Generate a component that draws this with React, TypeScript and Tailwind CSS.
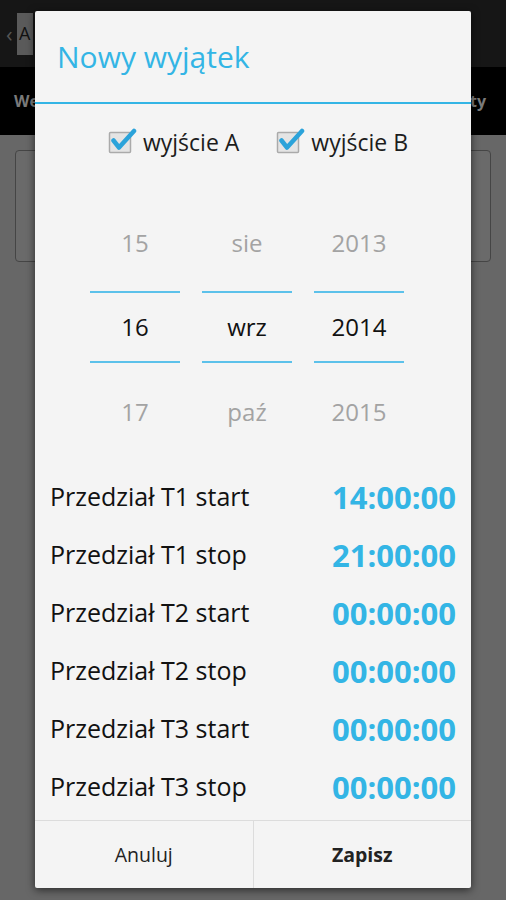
import React from "react";

const rows = [
  { label: "Przedział T1 start", value: "14:00:00" },
  { label: "Przedział T1 stop", value: "21:00:00" },
  { label: "Przedział T2 start", value: "00:00:00" },
  { label: "Przedział T2 stop", value: "00:00:00" },
  { label: "Przedział T3 start", value: "00:00:00" },
  { label: "Przedział T3 stop", value: "00:00:00" },
];

const columns = [
  ["15", "16", "17"],
  ["sie", "wrz", "paź"],
  ["2013", "2014", "2015"],
];

function CheckBox({ label }: { label: string }) {
  return (
    <div className="flex items-center gap-[5px]">
      <svg width="30" height="28" viewBox="0 0 30 28">
        <rect x="1.5" y="4.5" width="21" height="20" fill="#e4e4e4" stroke="#aaaaaa" strokeWidth="1.5" rx="1" />
        <path d="M5.5 12.5 L11 19.5 L26 3" fill="none" stroke="#2ba3da" strokeWidth="4.5" strokeLinecap="round" strokeLinejoin="round" />
      </svg>
      <span className="text-[23px] text-[#1c1c1c]">{label}</span>
    </div>
  );
}

function PickerColumn({ items }: { items: string[] }) {
  return (
    <div className="flex w-[90px] flex-col items-center">
      <div className="mt-[45px] h-[36px] text-[24px] leading-[36px] text-[#a3a3a3]">{items[0]}</div>
      <div className="mt-[30px] h-[2px] w-full bg-[#5cc1ea]" />
      <div className="mt-[16px] h-[36px] text-[24px] leading-[36px] text-[#111]">{items[1]}</div>
      <div className="mt-[16px] h-[2px] w-full bg-[#5cc1ea]" />
      <div className="mt-[31px] h-[36px] text-[24px] leading-[36px] text-[#a3a3a3]">{items[2]}</div>
    </div>
  );
}

export default function App() {
  return (
    <div className="relative h-[900px] w-[506px] overflow-hidden bg-[#676767] font-['Open_Sans',sans-serif]">
      {/* action bar */}
      <div className="flex h-[67px] items-center bg-[#161616] pl-[6px]">
        <span className="text-[22px] text-[#555]">‹</span>
        <div className="ml-[4px] flex h-[42px] w-[16px] items-center justify-center bg-[#5a5a5a] text-[18px] text-[#111]">A</div>
      </div>
      {/* tabs */}
      <div className="flex h-[68px] items-center justify-between bg-black pl-[14px] pr-[20px] text-[16px] font-bold text-[#7a7a7a]">
        <span>Wejścia</span>
        <span>Wyjątki</span>
        <span>Kontakty</span>
      </div>
      {/* content */}
      <div className="px-[15px] pt-[15px]">
        <div className="h-[112px] rounded-[4px] border border-[#454545] bg-[#6a6a6a]" />
      </div>

      {/* dialog */}
      <div className="absolute left-[35px] top-[11px] flex h-[877px] w-[436px] flex-col rounded-[2px] bg-[#f4f4f4] shadow-[0_2px_8px_rgba(0,0,0,0.6)]">
        <div className="flex h-[91px] items-center pl-[22px] text-[30px] text-[#33b5e5]">Nowy wyjątek</div>
        <div className="h-[2px] bg-[#33b5e5]" />
        <div className="flex h-[76px] items-center justify-center gap-[37px] pl-[10px]">
          <CheckBox label="wyjście A" />
          <CheckBox label="wyjście B" />
        </div>
        <div className="flex gap-[22px] pb-[38px] pl-[55px]">
          {columns.map((c) => (
            <PickerColumn key={c[0]} items={c} />
          ))}
        </div>
        <div className="flex flex-col px-[15px]">
          {rows.map((r) => (
            <div key={r.label} className="flex h-[58px] items-center justify-between">
              <span className="text-[25px] text-[#111]">{r.label}</span>
              <span className="text-[31px] font-bold text-[#33b5e5]">{r.value}</span>
            </div>
          ))}
        </div>
        <div className="mt-auto flex h-[68px] border-t border-[#dcdcdc]">
          <div className="flex flex-1 items-center justify-center text-[19.5px] text-[#222]">Anuluj</div>
          <div className="w-px bg-[#dcdcdc]" />
          <div className="flex flex-1 items-center justify-center text-[19.5px] font-bold text-[#222]">Zapisz</div>
        </div>
      </div>
    </div>
  );
}
